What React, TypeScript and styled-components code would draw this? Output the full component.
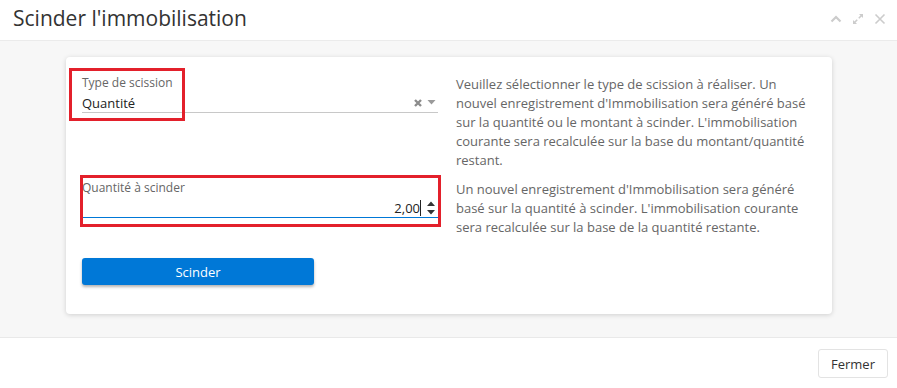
import styled, { createGlobalStyle } from "styled-components";

export default function App() {
  return (
    <>
      <GlobalStyle />
      <Dialog>
        <Header>
          <Title>Scinder l'immobilisation</Title>
          <HeaderTools>
            <ToolIcon viewBox="0 0 12 12">
              <path d="M1.5 8.5 L6 4 L10.5 8.5" fill="none" strokeWidth="2.2" />
            </ToolIcon>
            <ToolIcon viewBox="0 0 12 12">
              <path d="M7 1 H11 V5 Z M5 11 H1 V7 Z" strokeWidth="0" fill="currentColor" />
              <path d="M9.5 2.5 L6.8 5.2 M2.5 9.5 L5.2 6.8" fill="none" strokeWidth="1.6" />
            </ToolIcon>
            <ToolIcon viewBox="0 0 12 12">
              <path d="M1.5 1.5 L10.5 10.5 M10.5 1.5 L1.5 10.5" fill="none" strokeWidth="1.6" />
            </ToolIcon>
          </HeaderTools>
        </Header>

        <Body>
          <Card>
            <Field>
              <Highlight style={{ left: -13, top: -7, width: 116, height: 53 }} />
              <Label>Type de scission</Label>
              <ValueRow>
                <Value>Quantité</Value>
                <SelectIcons>
                  <ClearIcon viewBox="0 0 8 8">
                    <path d="M1 1 L7 7 M7 1 L1 7" />
                  </ClearIcon>
                  <CaretIcon viewBox="0 0 8 5">
                    <path d="M0 0 H8 L4 4.5 Z" />
                  </CaretIcon>
                </SelectIcons>
              </ValueRow>
            </Field>
            <Description>
              Veuillez sélectionner le type de scission à réaliser. Un nouvel
              enregistrement d'Immobilisation sera généré basé sur la quantité
              ou le montant à scinder. L'immobilisation courante sera recalculée
              sur la base du montant/quantité restant.
            </Description>

            <Field>
              <Highlight style={{ left: -2, top: -5, width: 361, height: 52 }} />
              <Label>Quantité à scinder</Label>
              <ValueRow $focused>
                <Value $right>
                  2,00
                  <Cursor />
                </Value>
                <Spinner viewBox="0 0 8 14">
                  <path d="M4 0.5 L8 5 H0 Z M0 9 H8 L4 13.5 Z" />
                </Spinner>
              </ValueRow>
            </Field>
            <Description>
              Un nouvel enregistrement d'Immobilisation sera généré basé sur la
              quantité à scinder. L'immobilisation courante sera recalculée sur
              la base de la quantité restante.
            </Description>

            <PrimaryButton>Scinder</PrimaryButton>
          </Card>
        </Body>

        <Footer>
          <CloseButton>Fermer</CloseButton>
        </Footer>
      </Dialog>
    </>
  );
}

const GlobalStyle = createGlobalStyle`
  html, body {
    margin: 0;
    padding: 0;
    background: #ffffff;
  }
  body {
    font-family: "Open Sans", "Noto Sans", sans-serif;
    color: #333333;
  }
`;

const Dialog = styled.div`
  display: flex;
  flex-direction: column;
  width: 897px;
  height: 388px;
  background: #ffffff;
`;

const Header = styled.div`
  display: flex;
  align-items: center;
  justify-content: space-between;
  height: 41px;
  padding: 0 11px 0 13px;
  border-bottom: 1px solid #ebebeb;
  box-sizing: border-box;
`;

const Title = styled.h1`
  margin: 0;
  margin-top: -4px;
  font-size: 21px;
  font-weight: 400;
  color: #333333;
`;

const HeaderTools = styled.div`
  display: flex;
  align-items: center;
  gap: 10px;
  color: #cccccc;
  margin-top: -3px;
`;

const ToolIcon = styled.svg`
  width: 12px;
  height: 12px;
  stroke: currentColor;
`;

const Body = styled.div`
  flex: 1;
  background: #f7f7f7;
  padding: 16px 65px 23px 66px;
  border-bottom: 1px solid #e9e9e9;
`;

const Card = styled.div`
  display: grid;
  grid-template-columns: 356px 1fr;
  column-gap: 18px;
  row-gap: 10px;
  align-items: start;
  background: #ffffff;
  border-radius: 4px;
  box-shadow: 0 1px 5px rgba(0, 0, 0, 0.16);
  padding: 18px 10px 29px 16px;
  height: 257px;
  box-sizing: border-box;
`;

const Field = styled.div`
  position: relative;
`;

const Highlight = styled.div`
  position: absolute;
  border: 3px solid #e3202b;
  box-sizing: border-box;
  pointer-events: none;
`;

const Label = styled.div`
  font-size: 12px;
  line-height: 16px;
  color: #666666;
  margin-bottom: 2px;
`;

const ValueRow = styled.div<{ $focused?: boolean }>`
  display: flex;
  align-items: center;
  height: 19px;
  border-bottom: 1px solid ${(p) => (p.$focused ? "#0078d7" : "#c8c8c8")};
  gap: 6px;
`;

const Value = styled.div<{ $right?: boolean }>`
  flex: 1;
  display: flex;
  align-items: center;
  justify-content: ${(p) => (p.$right ? "flex-end" : "flex-start")};
  font-size: 13px;
  line-height: 18px;
  color: #222222;
`;

const Cursor = styled.span`
  display: inline-block;
  width: 1px;
  height: 16px;
  background: #222222;
`;

const SelectIcons = styled.div`
  display: flex;
  align-items: center;
  gap: 5px;
  padding-right: 2px;
`;

const ClearIcon = styled.svg`
  width: 8px;
  height: 8px;
  stroke: #8c8c8c;
  stroke-width: 2.4;
`;

const CaretIcon = styled.svg`
  width: 9px;
  height: 5px;
  fill: #9a9a9a;
`;

const Spinner = styled.svg`
  width: 8px;
  height: 14px;
  fill: #333333;
  margin-right: 3px;
`;

const Description = styled.p`
  margin: 0;
  max-width: 362px;
  font-size: 13px;
  line-height: 19px;
  color: #666666;
`;

const PrimaryButton = styled.button`
  grid-column: 1;
  width: 232px;
  height: 27px;
  margin-top: 11px;
  border: none;
  border-radius: 3px;
  background: #0078d7;
  color: #ffffff;
  font-family: inherit;
  font-size: 13px;
  box-shadow: 0 2px 3px rgba(0, 0, 0, 0.3);
  cursor: pointer;
`;

const Footer = styled.div`
  display: flex;
  justify-content: flex-end;
  align-items: center;
  height: 50px;
  padding-right: 9px;
`;

const CloseButton = styled.button`
  height: 29px;
  padding: 0 12px;
  min-width: 70px;
  margin-top: 1px;
  background: #ffffff;
  border: 1px solid #e3e3e3;
  border-radius: 3px;
  font-family: inherit;
  font-size: 13px;
  color: #333333;
  cursor: pointer;
`;
